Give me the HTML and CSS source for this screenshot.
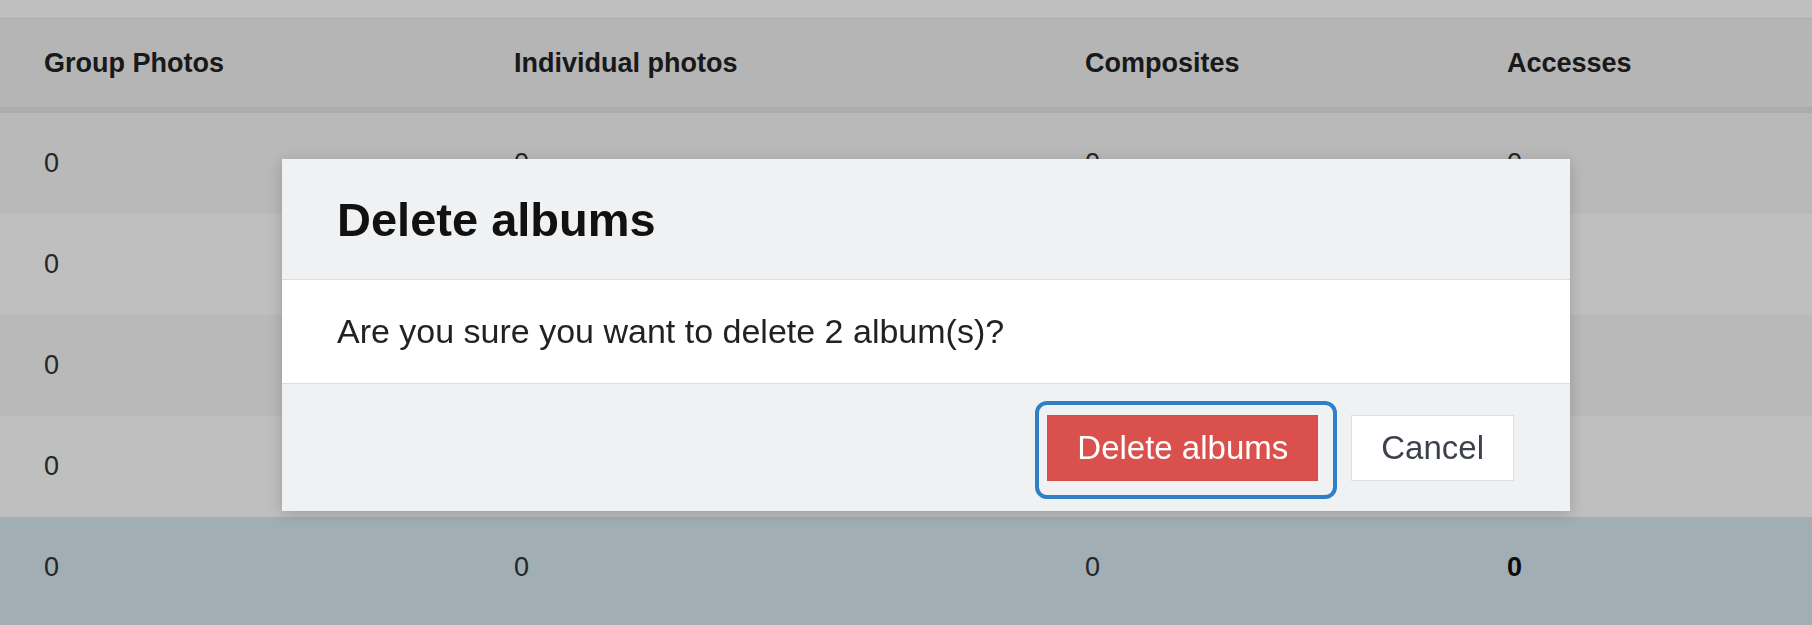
FILE: index.html
```html
<!DOCTYPE html>
<html lang="en">
<head>
    <meta charset="UTF-8">
    <meta name="viewport" content="width=device-width, initial-scale=1.0">
    <title>Albums</title>
    <link rel="stylesheet" href="styles.css">
</head>
<body>
    <div class="page">
        <div class="toolbar"></div>

        <div class="albums">
            <div class="row head">
                <div class="cell">Group Photos</div>
                <div class="cell">Individual photos</div>
                <div class="cell">Composites</div>
                <div class="cell">Accesses</div>
            </div>
            <div class="row odd">
                <div class="cell">0</div>
                <div class="cell">0</div>
                <div class="cell">0</div>
                <div class="cell">0</div>
            </div>
            <div class="row">
                <div class="cell">0</div>
                <div class="cell">0</div>
                <div class="cell">0</div>
                <div class="cell">0</div>
            </div>
            <div class="row odd">
                <div class="cell">0</div>
                <div class="cell">0</div>
                <div class="cell">0</div>
                <div class="cell">0</div>
            </div>
            <div class="row">
                <div class="cell">0</div>
                <div class="cell">0</div>
                <div class="cell">0</div>
                <div class="cell">0</div>
            </div>
            <div class="row selected">
                <div class="cell">0</div>
                <div class="cell">0</div>
                <div class="cell">0</div>
                <div class="cell strong">0</div>
            </div>
        </div>
    </div>

    <!-- 삭제 확인 모달 -->
    <div class="backdrop"></div>
    <div class="dialog" role="dialog">
        <div class="dialog-header">
            <h2 class="dialog-title">Delete albums</h2>
        </div>
        <div class="dialog-body">
            <p>Are you sure you want to delete 2 album(s)?</p>
        </div>
        <div class="dialog-footer">
            <button class="btn btn-danger focused">Delete albums</button>
            <button class="btn btn-default">Cancel</button>
        </div>
    </div>
</body>
</html>
```

FILE: styles.css
```css
* {
    margin: 0;
    padding: 0;
    box-sizing: border-box;
}

body {
    font-family: 'Liberation Sans', Arial, Helvetica, sans-serif;
    background: #fff;
    color: #333;
    overflow: hidden;
}

.toolbar {
    height: 18px;
    background: #fff;
}

.row {
    display: grid;
    grid-template-columns: 470px 571px 422px 1fr;
    align-items: center;
    height: 101px;
    background: #fff;
    font-size: 27px;
}

.cell {
    padding-left: 44px;
}

.row.head {
    height: 95px;
    background: #f2f2f3;
    border-top: 1px solid #e9e9e9;
    border-bottom: 6px solid #e6e6e6;
    font-weight: 700;
    color: #222;
}

.row.odd {
    background: #f7f7f7;
}

.row.selected {
    height: 120px;
    padding-bottom: 19px;
    background: #d7e8f1;
}

.strong {
    font-weight: 700;
    color: #111;
}

.backdrop {
    position: fixed;
    inset: 0;
    background: rgba(0, 0, 0, 0.25);
}

.dialog {
    position: fixed;
    left: 282px;
    top: 159px;
    width: 1288px;
    background: #f0f1f3;
    box-shadow: 0 3px 14px rgba(0, 0, 0, 0.18);
}

.dialog-header {
    height: 121px;
    display: flex;
    align-items: center;
    padding: 0 55px;
    border-bottom: 1px solid #dcdde0;
}

.dialog-title {
    font-size: 47px;
    font-weight: 700;
    line-height: 1;
    color: #111;
}

.dialog-body {
    height: 104px;
    display: flex;
    align-items: center;
    padding: 0 55px;
    background: #fff;
    border-bottom: 1px solid #dcdde0;
    font-size: 34px;
    color: #222;
}

.dialog-footer {
    height: 127px;
    display: flex;
    justify-content: flex-end;
    align-items: center;
    gap: 33px;
    padding: 0 56px;
}

.btn {
    position: relative;
    font-family: inherit;
    font-size: 33px;
    line-height: 38px;
    padding: 13px 29px;
    border: 1px solid transparent;
    border-radius: 0;
    cursor: pointer;
}

.btn-danger {
    background: #d9504c;
    border-color: #d44b47;
    color: #fff;
}

.btn-default {
    background: #fff;
    border-color: #dedede;
    color: #3c424c;
}

.btn.focused::after {
    content: '';
    position: absolute;
    top: -15px;
    left: -13px;
    right: -20px;
    bottom: -19px;
    border: 4px solid #2d7fc6;
    border-radius: 12px;
}
```
